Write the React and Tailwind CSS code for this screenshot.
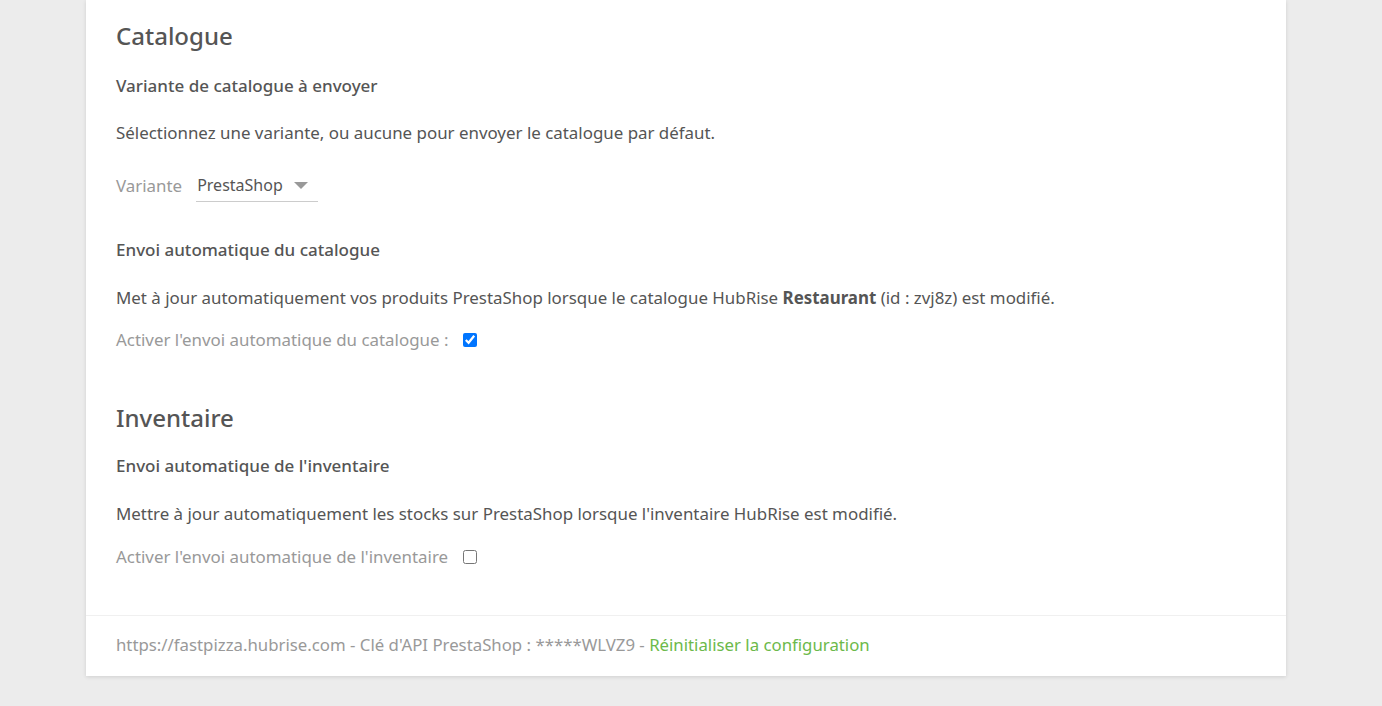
import { useState } from "react";

export default function App() {
  const [autoCatalog, setAutoCatalog] = useState(true);
  const [autoInventory, setAutoInventory] = useState(false);

  return (
    <div className="min-h-screen bg-[#ececec] font-['Noto_Sans',sans-serif] text-[#555555]">
      <div className="ml-[86px] w-[1200px] bg-white shadow-[0_1px_4px_rgba(0,0,0,0.12)]">
        <div className="px-[30px] pt-5 pb-[46px]">
          {/* CATALOGUE */}
          <h2 className="text-[24px] leading-[32px] font-medium text-[#555]">Catalogue</h2>
          <h3 className="mt-[22px] text-[17px] leading-[24px] font-medium text-[#555]">
            Variante de catalogue à envoyer
          </h3>
          <p className="mt-[23px] text-[16.9px] leading-[24px]">
            Sélectionnez une variante, ou aucune pour envoyer le catalogue par défaut.
          </p>
          <div className="mt-[24px] flex items-center h-[33px]">
            <span className="text-[16.9px] text-[#999] mr-[14px]">Variante</span>
            <div className="flex items-center h-[33px] w-[122px] border-b border-[#cccccc] pl-[1px]">
              <span className="text-[16px] text-[#555]">PrestaShop</span>
              <span className="ml-[11px] w-0 h-0 border-l-[7px] border-r-[7px] border-t-[7px] border-l-transparent border-r-transparent border-t-[#999]" />
            </div>
          </div>

          <h3 className="mt-[36px] text-[17px] leading-[24px] font-medium text-[#555]">
            Envoi automatique du catalogue
          </h3>
          <p className="mt-[24px] text-[16.9px] leading-[24px]">
            Met à jour automatiquement vos produits PrestaShop lorsque le catalogue HubRise{" "}
            <b className="font-bold">Restaurant</b> (id : zvj8z) est modifié.
          </p>
          <label className="mt-[18px] flex items-center h-[24px]">
            <span className="text-[16.9px] text-[#999]">Activer l'envoi automatique du catalogue :</span>
            <input
              type="checkbox"
              checked={autoCatalog}
              onChange={(e) => setAutoCatalog(e.target.checked)}
              className="ml-[15px] w-[14px] h-[14px]"
            />
          </label>

          {/* INVENTAIRE */}
          <h2 className="mt-[50px] text-[24px] leading-[32px] font-medium text-[#555]">Inventaire</h2>
          <h3 className="mt-[20px] text-[17px] leading-[24px] font-medium text-[#555]">
            Envoi automatique de l'inventaire
          </h3>
          <p className="mt-[24px] text-[16.9px] leading-[24px]">
            Mettre à jour automatiquement les stocks sur PrestaShop lorsque l'inventaire HubRise est modifié.
          </p>
          <label className="mt-[19px] flex items-center h-[24px]">
            <span className="text-[16.9px] text-[#999]">Activer l'envoi automatique de l'inventaire</span>
            <input
              type="checkbox"
              checked={autoInventory}
              onChange={(e) => setAutoInventory(e.target.checked)}
              className="ml-[15px] w-[14px] h-[14px]"
            />
          </label>
        </div>

        {/* FOOTER */}
        <div className="border-t border-[#f0f0f0] px-[30px] pt-[17px] pb-[19px] text-[16.8px] leading-[24px] text-[#999]">
          https://fastpizza.hubrise.com - Clé d'API PrestaShop : *****WLVZ9 -{" "}
          <a href="#" className="text-[#6cb94a]">Réinitialiser la configuration</a>
        </div>
      </div>
    </div>
  );
}
